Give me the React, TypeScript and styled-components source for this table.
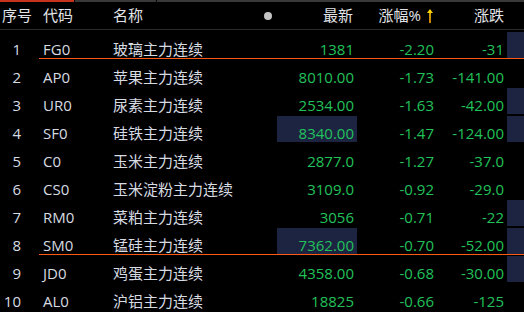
import React from "react";
import styled, { createGlobalStyle } from "styled-components";

const Global = createGlobalStyle`
  html, body { margin: 0; padding: 0; background: #000; }
  body { font-family: "Open Sans", "Noto Sans CJK SC", sans-serif; font-size: 15px; }
`;

const COLS = "39px 74px 164px 80px 80px 70px 17px";

const Page = styled.div`
  width: 524px;
  height: 312px;
  background: #000;
  overflow: hidden;
  color: #d7dbe2;
`;

const Tabs = styled.div`
  display: flex;
  gap: 1px;
  height: 2px;
`;

const Tab = styled.div<{ $w?: number; $active?: boolean }>`
  height: 2px;
  ${(p) => (p.$w ? `width: ${p.$w}px;` : "flex: 1;")}
  background: ${(p) => (p.$active ? "#c8321c" : "#383838")};
`;

const Header = styled.div`
  display: grid;
  grid-template-columns: ${COLS};
  height: 27px;
  border-bottom: 1px solid #2a2a2a;
  line-height: 27px;
  color: #e2e4e8;
`;

const HCell = styled.div<{ $align?: "left" | "right"; $pl?: number; $pr?: number }>`
  text-align: ${(p) => p.$align ?? "left"};
  padding-left: ${(p) => p.$pl ?? 0}px;
  padding-right: ${(p) => p.$pr ?? 0}px;
  white-space: nowrap;
`;

const NameHead = styled.div`
  display: flex;
  align-items: center;
  justify-content: space-between;
  padding-right: 5px;
`;

const Dot = styled.span`
  width: 8px;
  height: 8px;
  border-radius: 50%;
  background: #c4c4c4;
`;

const Arrow = styled.svg`
  width: 6px;
  height: 14px;
  vertical-align: -2px;
  margin-left: 6px;
`;

const Row = styled.div<{ $marked?: boolean }>`
  position: relative;
  display: grid;
  grid-template-columns: ${COLS};
  height: 28px;
  &::after {
    content: "";
    display: ${(p) => (p.$marked ? "block" : "none")};
    position: absolute;
    left: 39px;
    right: 0;
    bottom: -1px;
    height: 1px;
    background: #ff5a14;
  }
`;

const Cell = styled.div<{ $align?: "left" | "right"; $pl?: number; $pr?: number; $green?: boolean; $hl?: boolean }>`
  margin-top: 2px;
  height: 26px;
  box-sizing: border-box;
  padding-top: 8px;
  line-height: 18px;
  text-align: ${(p) => p.$align ?? "left"};
  padding-left: ${(p) => p.$pl ?? 0}px;
  padding-right: ${(p) => p.$pr ?? 0}px;
  color: ${(p) => (p.$green ? "#22c25a" : "#d7dbe2")};
  background: ${(p) => (p.$hl ? "#1c2442" : "transparent")};
  white-space: nowrap;
`;

type R = {
  n: number;
  code: string;
  name: string;
  last: string;
  pct: string;
  chg: string;
  hlLast?: boolean;
  hlSide?: boolean;
  marked?: boolean;
};

const rows: R[] = [
  { n: 1, code: "FG0", name: "玻璃主力连续", last: "1381", pct: "-2.20", chg: "-31", hlSide: true, marked: true },
  { n: 2, code: "AP0", name: "苹果主力连续", last: "8010.00", pct: "-1.73", chg: "-141.00" },
  { n: 3, code: "UR0", name: "尿素主力连续", last: "2534.00", pct: "-1.63", chg: "-42.00", hlSide: true },
  { n: 4, code: "SF0", name: "硅铁主力连续", last: "8340.00", pct: "-1.47", chg: "-124.00", hlLast: true, hlSide: true },
  { n: 5, code: "C0", name: "玉米主力连续", last: "2877.0", pct: "-1.27", chg: "-37.0" },
  { n: 6, code: "CS0", name: "玉米淀粉主力连续", last: "3109.0", pct: "-0.92", chg: "-29.0" },
  { n: 7, code: "RM0", name: "菜粕主力连续", last: "3056", pct: "-0.71", chg: "-22", hlSide: true },
  { n: 8, code: "SM0", name: "锰硅主力连续", last: "7362.00", pct: "-0.70", chg: "-52.00", hlLast: true, hlSide: true, marked: true },
  { n: 9, code: "JD0", name: "鸡蛋主力连续", last: "4358.00", pct: "-0.68", chg: "-30.00", hlSide: true },
  { n: 10, code: "AL0", name: "沪铝主力连续", last: "18825", pct: "-0.66", chg: "-125" },
];

export default function App() {
  return (
    <Page>
      <Global />
      <Tabs>
        <Tab $w={74} $active />
        <Tab $w={81} />
        <Tab />
      </Tabs>
      <Header>
        <HCell $pl={2}>序号</HCell>
        <HCell $pl={4}>代码</HCell>
        <NameHead>
          <span>名称</span>
          <Dot />
        </NameHead>
        <HCell $align="right" $pr={4}>最新</HCell>
        <HCell $align="right" $pr={4}>
          涨幅%
          <Arrow viewBox="0 0 6 14">
            <defs>
              <linearGradient id="ag" x1="0" y1="0" x2="0" y2="1">
                <stop offset="0" stopColor="#ffe000" />
                <stop offset="1" stopColor="#ff9a00" />
              </linearGradient>
            </defs>
            <path d="M3 0 L6 4 L3.8 4 L3.8 14 L2.2 14 L2.2 4 L0 4 Z" fill="url(#ag)" />
          </Arrow>
        </HCell>
        <HCell $align="right" $pr={3}>涨跌</HCell>
        <HCell />
      </Header>
      {rows.map((r) => (
        <Row key={r.n} $marked={r.marked}>
          <Cell $align="right" $pr={18}>{r.n}</Cell>
          <Cell $pl={4}>{r.code}</Cell>
          <Cell>{r.name}</Cell>
          <Cell $align="right" $pr={3} $green $hl={r.hlLast}>{r.last}</Cell>
          <Cell $align="right" $pr={3} $green>{r.pct}</Cell>
          <Cell $align="right" $pr={3} $green>{r.chg}</Cell>
          <Cell $hl={r.hlSide} />
        </Row>
      ))}
    </Page>
  );
}
